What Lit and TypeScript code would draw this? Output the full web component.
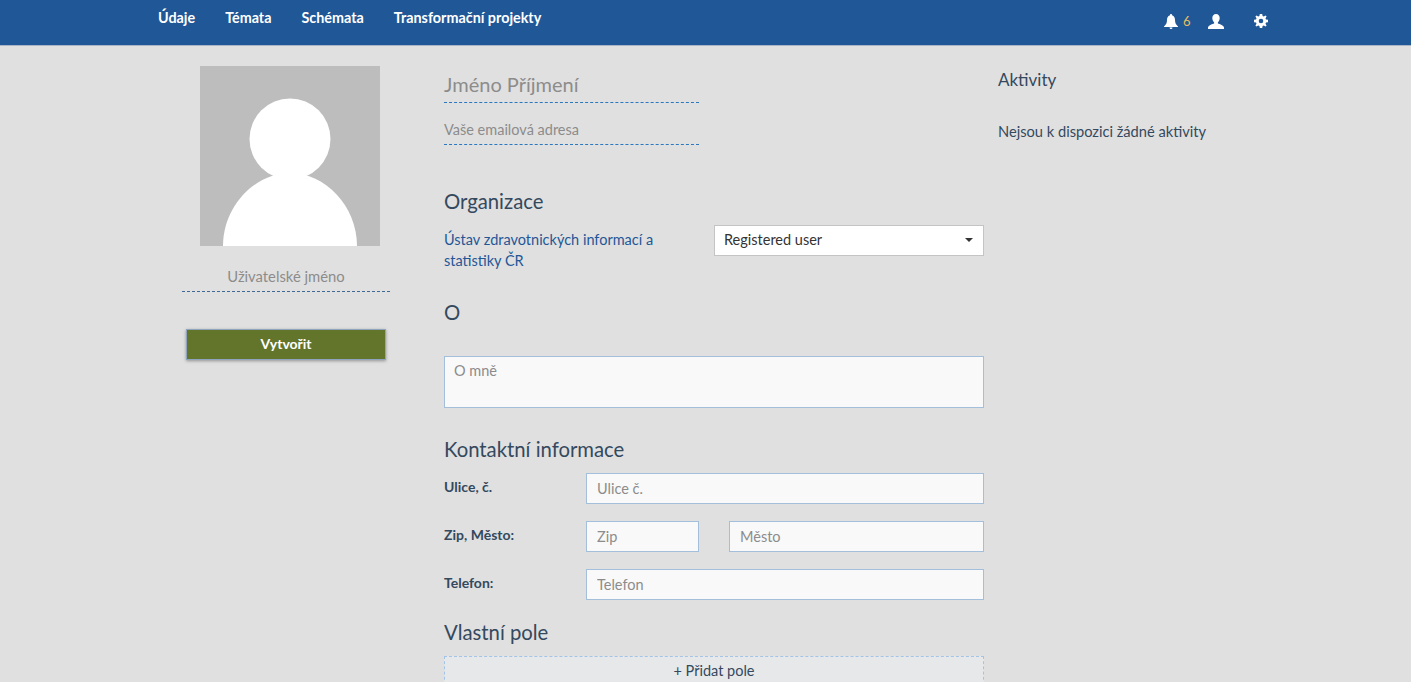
import { LitElement, css, html } from 'lit';
import { customElement } from 'lit/decorators.js';

@customElement('app-root')
export class AppRoot extends LitElement {
  static override styles = css`
    :host {
      display: block;
      height: 682px;
      overflow: hidden;
      background: #e0e0e0;
      color: #34495e;
      font-family: 'Lato', 'Noto Sans', sans-serif;
      font-size: 14.5px;
      line-height: 21px;
    }
    * {
      box-sizing: border-box;
    }

    .topbar {
      height: 46px;
      background: #1f5797;
      border-bottom: 1px solid #a9b5c4;
      display: flex;
      justify-content: space-between;
      padding: 0 0 0 158px;
      color: #fff;
    }
    .nav {
      display: flex;
      gap: 30px;
      padding-top: 7px;
      font-size: 14.35px;
      font-weight: 700;
      height: 30px;
    }
    .tools {
      display: flex;
      align-items: center;
      padding: 0 143px 3px 0;
    }
    .tools svg {
      display: block;
      fill: #fff;
    }
    .count {
      color: #e8bd62;
      font-size: 13px;
      margin: 0 17px 0 5px;
      width: 8px;
    }
    .user-icon {
      margin-right: 30px;
    }

    .page {
      display: grid;
      grid-template-columns: 208px 540px auto;
      column-gap: 54px;
      padding-left: 182px;
    }

    .profile {
      display: flex;
      flex-direction: column;
      align-items: center;
      padding-top: 20px;
    }
    .avatar {
      display: block;
      width: 180px;
      height: 180px;
      margin-left: 8px;
    }
    .username {
      align-self: stretch;
      text-align: center;
      color: #8c8c8c;
      padding-top: 20px;
      height: 46px;
      line-height: 21px;
      font-size: 14.8px;
      border-bottom: 1px dashed #3f6a96;
    }
    .create {
      margin-top: 37px;
      width: 200px;
      height: 31px;
      border: 1px solid #8fa5bd;
      background: #63752b;
      color: #fff;
      font: inherit;
      font-size: 14px;
      font-weight: 700;
      box-shadow: 0 1px 3px rgba(0, 0, 0, 0.35);
      padding: 0 0 2px;
    }

    .name,
    .email {
      width: 255px;
      color: #8c8c8c;
      border-bottom: 1px dashed #2b78c2;
    }
    .name {
      margin-top: 20px;
      height: 37px;
      font-size: 20px;
      line-height: 36px;
    }
    .email {
      margin-top: 15px;
      height: 27px;
      line-height: 24px;
    }

    h2 {
      margin: 0;
      font-size: 20.3px;
      font-weight: 400;
      line-height: 26px;
    }
    .org-title {
      margin-top: 43px;
    }
    .org {
      display: flex;
      justify-content: space-between;
      margin-top: 11px;
    }
    .org a {
      display: block;
      width: 240px;
      padding-top: 4px;
      color: #1f5797;
      text-decoration: none;
    }
    .role {
      width: 270px;
      height: 31px;
      background: #fff;
      border: 1px solid #c4c4c4;
      color: #333;
      padding: 0 10px 2px 9px;
      display: flex;
      align-items: center;
      justify-content: space-between;
    }
    .caret {
      width: 0;
      height: 0;
      border: 4px solid transparent;
      border-top-color: #333;
      border-bottom: 0;
    }
    .about-title {
      margin-top: 28px;
    }
    textarea,
    input {
      display: block;
      background: #f9f9f9;
      border: 1px solid #a3bfdc;
      border-radius: 0;
      outline: none;
      font: inherit;
      margin: 0;
    }
    textarea::placeholder,
    input::placeholder {
      color: #8c8c8c;
      opacity: 1;
    }
    textarea {
      width: 100%;
      height: 52px;
      margin-top: 31px;
      padding: 3px 9px;
      resize: none;
    }
    .contact-title {
      margin-top: 28px;
    }
    .row {
      display: flex;
      gap: 30px;
      height: 31px;
      margin-top: 17px;
    }
    .contact-title + .row {
      margin-top: 11px;
    }
    .row label {
      width: 112px;
      flex: none;
      font-size: 14px;
      font-weight: 700;
      line-height: 27px;
    }
    input {
      height: 31px;
      padding: 0 10px;
      flex: 1;
      min-width: 0;
    }
    input.zip {
      flex: 0 0 113px;
    }
    .custom-title {
      margin-top: 19px;
    }
    .add {
      margin-top: 11px;
      height: 60px;
      background: #e6e8ea;
      border: 1px dashed #a3c4e6;
      text-align: center;
      padding-top: 3px;
    }

    .activity {
      margin-left: -40px;
      padding-top: 21px;
    }
    .activity h3 {
      margin: 0;
      font-size: 17px;
      font-weight: 400;
      line-height: 26px;
    }
    .activity p {
      margin: 28px 0 0;
      font-size: 14.65px;
    }
  `;

  override render() {
    return html`
      <header class="topbar">
        <nav class="nav">
          <span>Údaje</span>
          <span>Témata</span>
          <span>Schémata</span>
          <span>Transformační projekty</span>
        </nav>
        <div class="tools">
          <svg width="14" height="15" viewBox="0 0 14 15">
            <path d="M7 0a1 1 0 0 1 1 1.2C10.400 2 11 4 11 6c0 3 1 4.500 3 6.500v.5H0v-.5C2 10.500 3 9 3 6c0-2 .6-4 3-4.800A1 1 0 0 1 7 0zM5.500 13.500h3a1.500 1.500 0 0 1-3 0z" />
          </svg>
          <span class="count">6</span>
          <svg class="user-icon" width="16" height="15" viewBox="0 0 16 15">
            <path d="M8 0c2.300 0 3.700 1.700 3.700 4 0 1.700-.8 3.300-1.800 4.200v1.300c1.800.7 5.100 1.800 5.900 3.200.2.500.2 1.300.2 2.300H0c0-1 0-1.800.2-2.300.8-1.400 4.100-2.500 5.900-3.200V8.200C5.100 7.300 4.300 5.700 4.300 4 4.300 1.700 5.700 0 8 0z" />
          </svg>
          <svg width="14" height="14" viewBox="0 0 14 14">
            <path
              fill-rule="evenodd"
              d="M5.800 0h2.400l.4 2 1.200.5L11.500 1.400l1.100 1.100-1.100 1.700.5 1.200 2 .4v2.400l-2 .4-.5 1.200 1.100 1.700-1.100 1.100-1.700-1.100-1.200.5-.4 2H5.800l-.4-2-1.200-.5-1.700 1.100-1.100-1.100 1.100-1.700-.5-1.200-2-.4V5.800l2-.4.500-1.200L1.400 2.500l1.100-1.100 1.700 1.100 1.200-.5zM7 4.700a2.300 2.300 0 1 0 0 4.600 2.300 2.300 0 0 0 0-4.600z"
            />
          </svg>
        </div>
      </header>

      <main class="page">
        <section class="profile">
          <svg class="avatar" viewBox="0 0 180 180">
            <rect width="180" height="180" fill="#bdbdbd" />
            <circle cx="90" cy="73" r="40.500" fill="#fff" />
            <path d="M23 180C23 140 55 107 90 107s67 33 67 73z" fill="#fff" />
          </svg>
          <div class="username">Uživatelské jméno</div>
          <button class="create">Vytvořit</button>
        </section>

        <section>
          <div class="name">Jméno Příjmení</div>
          <div class="email">Vaše emailová adresa</div>

          <h2 class="org-title">Organizace</h2>
          <div class="org">
            <a href="#">Ústav zdravotnických informací a statistiky ČR</a>
            <div class="role">Registered user <span class="caret"></span></div>
          </div>

          <h2 class="about-title">O</h2>
          <textarea placeholder="O mně"></textarea>

          <h2 class="contact-title">Kontaktní informace</h2>
          <div class="row">
            <label>Ulice, č.</label>
            <input placeholder="Ulice č." />
          </div>
          <div class="row">
            <label>Zip, Město:</label>
            <input class="zip" placeholder="Zip" />
            <input placeholder="Město" />
          </div>
          <div class="row">
            <label>Telefon:</label>
            <input placeholder="Telefon" />
          </div>

          <h2 class="custom-title">Vlastní pole</h2>
          <div class="add">+ Přidat pole</div>
        </section>

        <aside class="activity">
          <h3>Aktivity</h3>
          <p>Nejsou k dispozici žádné aktivity</p>
        </aside>
      </main>
    `;
  }
}
